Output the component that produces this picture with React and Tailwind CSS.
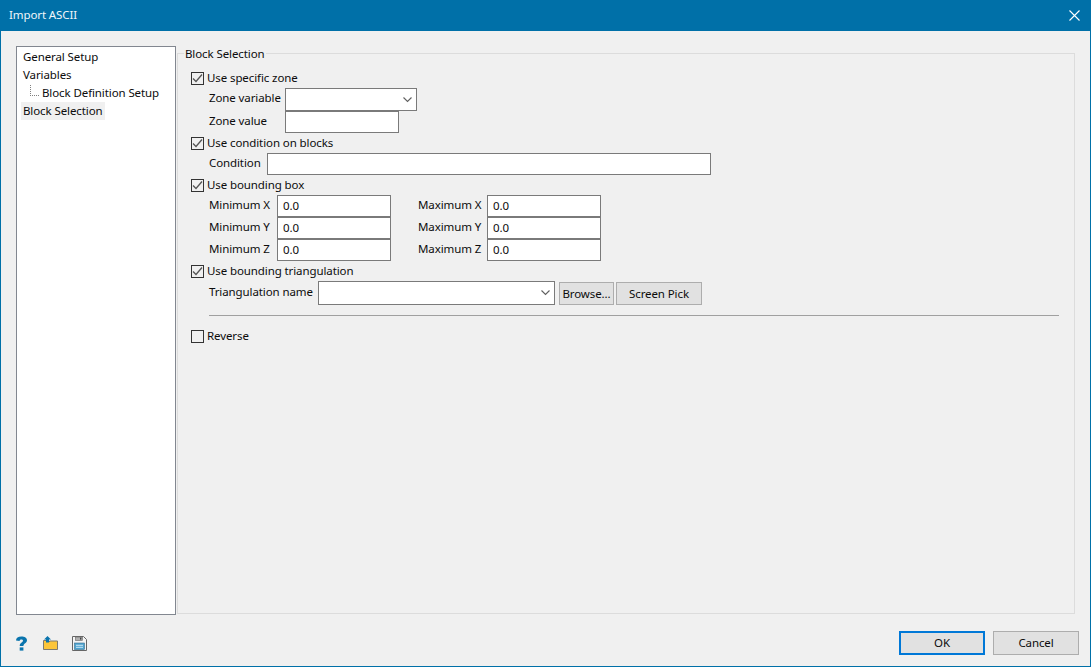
function Check({ checked = true, label }) {
  return (
    <div className="flex items-center h-[18px] ml-[13px]">
      <span className="w-[13px] h-[13px] border border-[#333333] bg-[#f0f0f0] flex items-center justify-center shrink-0">
        {checked && (
          <svg width="11" height="11" viewBox="0 0 11 11" fill="none">
            <path d="M1 5.5 L4 8.5 L10 1.5" stroke="#555555" strokeWidth="1.3" />
          </svg>
        )}
      </span>
      <span className="ml-[3px] whitespace-nowrap">{label}</span>
    </div>
  );
}

function Chevron() {
  return (
    <svg width="9" height="6" viewBox="0 0 9 6" fill="none" className="shrink-0">
      <path d="M0.5 0.5 L4.5 4.5 L8.5 0.5" stroke="#606060" strokeWidth="1.1" />
    </svg>
  );
}

function Combo({ className }) {
  return (
    <div className={`border border-[#7a7a7a] bg-white flex items-center justify-end pr-[4px] ${className}`}>
      <Chevron />
    </div>
  );
}

function Field({ value = '', className }) {
  return (
    <input
      readOnly
      value={value}
      className={`border border-[#7a7a7a] bg-white pl-[5px] pb-[1px] h-[22px] outline-none shrink-0 ${className}`}
    />
  );
}

function Label({ className, children }) {
  return <span className={`shrink-0 pb-[3px] whitespace-nowrap ${className}`}>{children}</span>;
}

function Btn({ className, children }) {
  return (
    <button className={`bg-[#e1e1e1] border border-[#adadad] flex items-center justify-center shrink-0 whitespace-nowrap ${className}`}>
      {children}
    </button>
  );
}

function BoxRow({ axis }) {
  return (
    <div className="flex items-center h-[22px] ml-[31px]">
      <Label className="w-[68px]">Minimum {axis}</Label>
      <Field value="0.0" className="w-[114px]" />
      <Label className="w-[69px] ml-[27px]">Maximum {axis}</Label>
      <Field value="0.0" className="w-[114px]" />
    </div>
  );
}

export default function App() {
  return (
    <div
      className="w-[1091px] h-[667px] flex flex-col bg-[#f0f0f0] border-x border-b border-[#0070a8] text-[11.5px] tracking-[-0.1px] leading-[16px] text-[#0c0c0c] overflow-hidden"
      style={{ fontFamily: '"Noto Sans", "Open Sans", sans-serif' }}
    >
      {/* Title bar */}
      <div className="h-[31px] bg-[#0070a8] flex items-center justify-between pl-[8px] pr-[10px] text-[#f0f6fa] shrink-0">
        <span className="pb-[1px]">Import ASCII</span>
        <svg width="11" height="11" viewBox="0 0 11 11" fill="none" className="mb-[1px]">
          <path d="M0.5 0.5 L10.5 10.5 M10.5 0.5 L0.5 10.5" stroke="#ffffff" strokeWidth="1.1" />
        </svg>
      </div>

      {/* Body */}
      <div className="flex pt-[15px] pl-[15px]">
        {/* Tree */}
        <div className="w-[160px] h-[569px] bg-white border border-[#828790] pt-[1px] shrink-0">
          <div className="h-[18px] pl-[6px] flex items-center whitespace-nowrap">General Setup</div>
          <div className="h-[18px] pl-[6px] flex items-center whitespace-nowrap">Variables</div>
          <div className="h-[18px] pl-[13px] flex items-center whitespace-nowrap">
            <span className="w-[9px] h-[11px] mb-[6px] border-l border-b border-dotted border-[#808080] shrink-0" />
            <span className="ml-[3px]">Block Definition Setup</span>
          </div>
          <div className="h-[18px] flex items-center ml-[4px] pl-[2px] w-[84px] bg-[#f0f0f0] whitespace-nowrap">Block Selection</div>
        </div>

        {/* Group box */}
        <fieldset className="w-[898px] h-[568px] ml-[1px] border border-[#dcdcdc] shrink-0">
          <legend className="ml-[6px] px-[1px] h-[14px] pt-[1px] leading-[14px] whitespace-nowrap">Block Selection</legend>
          <div className="pt-[9px]">
            <Check label="Use specific zone" />
            <div className="flex items-center h-[23px] mt-[1px] ml-[31px]">
              <Label className="w-[76px]">Zone variable</Label>
              <Combo className="w-[132px] h-[23px]" />
            </div>
            <div className="flex items-center h-[22px] ml-[31px]">
              <Label className="w-[76px]">Zone value</Label>
              <Field className="w-[114px]" />
            </div>

            <div className="mt-[1px]">
              <Check label="Use condition on blocks" />
            </div>
            <div className="flex items-center h-[22px] mt-[1px] ml-[31px]">
              <Label className="w-[58px]">Condition</Label>
              <Field className="w-[444px]" />
            </div>

            <div className="mt-[1px]">
              <Check label="Use bounding box" />
            </div>
            <div className="mt-[1px]">
              <BoxRow axis="X" />
              <BoxRow axis="Y" />
              <BoxRow axis="Z" />
            </div>

            <div className="mt-[1px]">
              <Check label="Use bounding triangulation" />
            </div>
            <div className="flex items-center h-[24px] mt-[1px] ml-[31px]">
              <Label className="w-[109px]">Triangulation name</Label>
              <Combo className="w-[237px] h-[24px]" />
              <Btn className="w-[55px] h-[23px] ml-[4px] mt-[1px]">Browse...</Btn>
              <Btn className="w-[86px] h-[23px] ml-[2px] mt-[1px]">Screen Pick</Btn>
            </div>

            <div className="h-[1px] w-[850px] ml-[31px] mt-[10px] bg-[#a0a0a0]" />

            <div className="mt-[11px]">
              <Check checked={false} label="Reverse" />
            </div>
          </div>
        </fieldset>
      </div>

      {/* Footer */}
      <div className="flex items-center justify-between h-[24px] mt-[16px] pl-[14px] pr-[11px]">
        <div className="flex items-center">
          <svg width="13" height="15" viewBox="0 0 13 15" fill="none">
            <path d="M1 4.6 C1 1.9 3.2 0.6 6.4 0.6 C9.6 0.6 12 2 12 4.4 C12 7 8.4 7.2 8.4 10 L4.7 10 C4.7 6.6 8 6.3 8 4.8 C8 3.9 7.3 3.5 6.3 3.5 C5.2 3.5 4.6 4.1 4.6 5.1 Z" fill="#0a74ad" />
            <rect x="4.7" y="11.4" width="3.7" height="3.2" fill="#0a74ad" />
          </svg>
          <svg width="15" height="14" viewBox="0 0 15 14" fill="none" className="ml-[15px]">
            <path d="M0.5 13.5 V4.5 H5 L6.5 6 V5 H14.5 V13.5 Z" fill="#fcc53a" stroke="#7d7a70" strokeWidth="1" />
            <path d="M4.5 0 L8 3.5 H6 V6.5 H3 V3.5 H1 Z" fill="#0a74ad" />
          </svg>
          <svg width="15" height="15" viewBox="0 0 15 15" fill="none" className="ml-[14px]">
            <path d="M0.5 0.5 H11.5 L14.5 3.5 V14.5 H0.5 Z" fill="#f4f4f4" stroke="#666666" strokeWidth="1" />
            <rect x="3.5" y="1" width="7" height="3.5" fill="#b0b0b0" stroke="#666666" strokeWidth="0.6" />
            <rect x="8" y="1.6" width="1.4" height="2" fill="#444444" />
            <rect x="2.5" y="7" width="10" height="6.5" fill="#4fa3cf" stroke="#3a6f8e" strokeWidth="0.6" />
            <path d="M4 9.3 H11 M4 11.3 H11" stroke="#d8eef8" strokeWidth="0.9" />
          </svg>
        </div>
        <div className="flex items-center gap-[8px]">
          <Btn className="w-[86px] h-[24px] !border-2 !border-[#0078d7]">OK</Btn>
          <Btn className="w-[86px] h-[24px]">Cancel</Btn>
        </div>
      </div>
    </div>
  );
}
